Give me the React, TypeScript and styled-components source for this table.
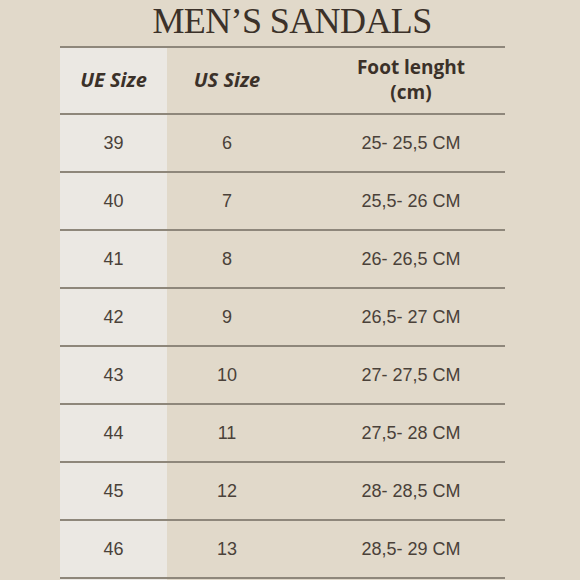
import styled, { createGlobalStyle } from 'styled-components';

const GlobalStyle = createGlobalStyle`
    html, body {
        margin: 0;
        padding: 0;
        background: #e1d9ca;
    }
    * {
        box-sizing: border-box;
    }
`;

const Page = styled.div`
    width: 580px;
    height: 580px;
    overflow: hidden;
    background: #e1d9ca;
    display: flex;
    flex-direction: column;
    align-items: flex-start;
`;

const Title = styled.h1`
    align-self: stretch;
    flex-shrink: 0;
    margin: 0;
    height: 46px;
    padding-left: 4px;
    text-align: center;
    font-family: 'Liberation Serif', 'DejaVu Serif', serif;
    font-weight: 400;
    font-size: 36px;
    line-height: 43px;
    letter-spacing: -0.6px;
    color: #3b3129;
`;

const Table = styled.div`
    flex-shrink: 0;
    margin-left: 60px;
    width: 445px;
    display: flex;
    flex-direction: column;
`;

interface RowProps {
    $height: number;
}

const Row = styled.div<RowProps>`
    display: grid;
    grid-template-columns: 107px 120px 1fr;
    height: ${({ $height }) => $height}px;
    flex-shrink: 0;
    border-top: 2px solid #8e877b;
`;

interface CellProps {
    $first?: boolean;
    $wide?: boolean;
}

const Cell = styled.div<CellProps>`
    display: flex;
    align-items: center;
    justify-content: center;
    text-align: center;
    background: ${({ $first }) => ($first ? '#ebe8e3' : 'transparent')};
    padding-left: ${({ $wide }) => ($wide ? '30px' : '0')};
    font-family: 'Liberation Sans', Arial, sans-serif;
    font-size: 18px;
    color: #4a4139;
`;

const HeadCell = styled(Cell)<{ $italic?: boolean }>`
    font-family: 'Open Sans', 'Noto Sans', sans-serif;
    font-weight: 700;
    font-style: ${({ $italic }) => ($italic ? 'italic' : 'normal')};
    font-size: ${({ $italic }) => ($italic ? '20px' : '19px')};
    line-height: 25px;
    color: #3b3129;
    padding-bottom: 2px;
`;

const rows: [string, string, string][] = [
    ['39', '6', '25- 25,5 CM'],
    ['40', '7', '25,5- 26 CM'],
    ['41', '8', '26- 26,5 CM'],
    ['42', '9', '26,5- 27 CM'],
    ['43', '10', '27- 27,5 CM'],
    ['44', '11', '27,5- 28 CM'],
    ['45', '12', '28- 28,5 CM'],
    ['46', '13', '28,5- 29 CM'],
];

export default function App() {
    return (
        <Page>
            <GlobalStyle />
            <Title>MEN’S SANDALS</Title>
            <Table>
                <Row $height={67}>
                    <HeadCell $first $italic>
                        UE Size
                    </HeadCell>
                    <HeadCell $italic>US Size</HeadCell>
                    <HeadCell $wide>
                        Foot lenght
                        <br />
                        (cm)
                    </HeadCell>
                </Row>
                {rows.map(([eu, us, foot]) => (
                    <Row key={eu} $height={58}>
                        <Cell $first>{eu}</Cell>
                        <Cell>{us}</Cell>
                        <Cell $wide>{foot}</Cell>
                    </Row>
                ))}
                <Row $height={10}>
                    <Cell $first />
                </Row>
            </Table>
        </Page>
    );
}
